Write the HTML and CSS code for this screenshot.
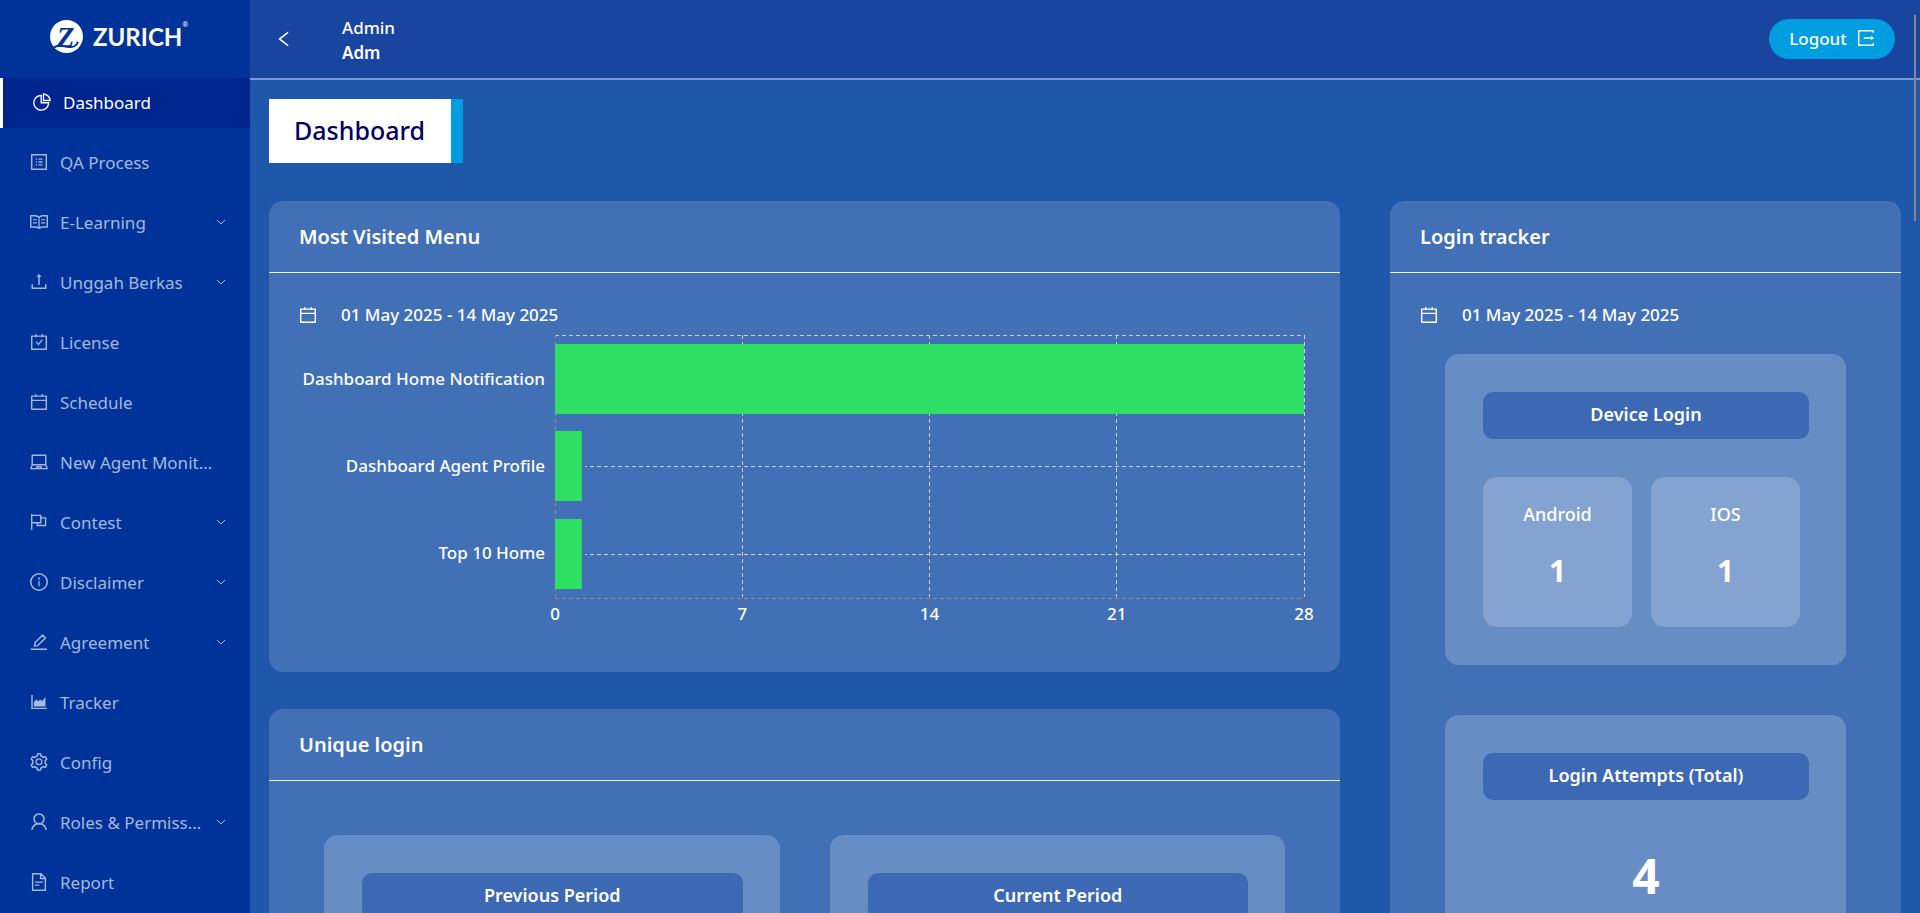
FILE: index.html
```html
<!DOCTYPE html>
<html lang="en">
<head>
<meta charset="utf-8">
<title>Dashboard</title>
<meta name="viewport" content="width=device-width, initial-scale=1">
<link rel="stylesheet" href="styles.css">
</head>
<body>
<svg class="sprite" aria-hidden="true">
  <symbol id="i-pie" viewBox="64 64 896 896"><path d="M864 518H506V160c0-4.400-3.600-8-8-8h-26a398.460 398.460 0 00-282.800 117.100 398.190 398.190 0 00-85.700 127.100A397.610 397.610 0 0072 552a398.460 398.460 0 00117.100 282.800c36.700 36.700 79.500 65.600 127.100 85.700A397.610 397.610 0 00472 952a398.460 398.460 0 00282.800-117.100c36.700-36.700 65.600-79.500 85.700-127.100A397.610 397.610 0 00872 552v-26c0-4.400-3.600-8-8-8zM705.700 787.800A331.590 331.590 0 01470.400 884c-88.100-.4-170.900-34.900-233.200-97.200C174.500 724.100 140 640.700 140 552c0-88.700 34.500-172.100 97.200-234.800 54.600-54.600 124.900-87.900 200.800-95.500V586h364.300c-7.700 76.300-41.300 147-96.600 201.800zM952 462.400l-2.600-28.200c-8.500-92.100-49.400-179-115.200-244.600A399.400 399.400 0 00589 74.600L560.700 72c-4.700-.4-8.700 3.200-8.700 7.900V464c0 4.400 3.600 8 8 8l384-1c4.700 0 8.400-4 8-8.600zm-332.200-58.200V147.600a332.240 332.240 0 01166.400 89.800c45.700 45.600 77 103.600 90 166.100l-256.400.7z"/></symbol>
  <symbol id="i-profile" viewBox="64 64 896 896"><path fill="none" stroke="currentColor" stroke-width="72" stroke-linejoin="round" d="M148 148h728v728H148z"/><path d="M484 336h200v64H484zM484 480h200v64H484zM484 624h200v64H484z"/><circle cx="380" cy="368" r="40"/><circle cx="380" cy="512" r="40"/><circle cx="380" cy="656" r="40"/></symbol>
  <symbol id="i-read" viewBox="64 64 896 896"><path d="M928 161H699.200c-49.100 0-97.100 14.100-138.400 40.700L512 233l-48.800-31.300A255.200 255.200 0 00324.800 161H96c-17.700 0-32 14.300-32 32v568c0 17.700 14.300 32 32 32h228.800c49.100 0 97.100 14.100 138.400 40.700l44.400 28.600c1.300.8 2.800 1.300 4.300 1.300s3-.4 4.300-1.300l44.400-28.600C602 807.100 650.100 793 699.200 793H928c17.700 0 32-14.300 32-32V193c0-17.700-14.300-32-32-32zM324.800 721H136V233h188.800c35.400 0 69.800 10.100 99.500 29.200l48.800 31.300 6.900 4.500v462c-47.600-25.600-100.800-39-155.200-39zm563.200 0H699.200c-54.400 0-107.600 13.400-155.200 39V298l6.900-4.500 48.800-31.300c29.700-19.100 64.100-29.200 99.500-29.200H888v488zM208 369h200v60H208zM208 529h200v60H208zM616 369h200v60H616zM616 529h200v60H616z"/></symbol>
  <symbol id="i-upload" viewBox="64 64 896 896"><path d="M518.300 114.300a8 8 0 00-12.600 0l-112 141.700c-4.100 5.300-.4 13 6.300 13h73.900V654c0 4.400 3.600 8 8 8h60c4.400 0 8-3.600 8-8V269H624c6.700 0 10.400-7.700 6.300-12.900L518.300 114.300zM878 626h-60c-4.400 0-8 3.600-8 8v154H214V634c0-4.400-3.600-8-8-8h-60c-4.400 0-8 3.600-8 8v198c0 17.700 14.300 32 32 32h684c17.700 0 32-14.300 32-32V634c0-4.400-3.600-8-8-8z"/></symbol>
  <symbol id="i-check" viewBox="64 64 896 896"><path fill="none" stroke="currentColor" stroke-width="72" stroke-linejoin="round" d="M148 220h728v656H148z"/><path fill="none" stroke="currentColor" stroke-width="64" d="M352 112v160M672 112v160M370 500l112 140 190-240"/></symbol>
  <symbol id="i-calendar" viewBox="64 64 896 896"><path fill="none" stroke="currentColor" stroke-width="72" stroke-linejoin="round" d="M148 220h728v656H148z"/><path fill="none" stroke="currentColor" stroke-width="64" d="M352 112v152M672 112v152M148 428h728"/></symbol>
  <symbol id="i-laptop" viewBox="64 64 896 896"><path fill="none" stroke="currentColor" stroke-width="68" stroke-linejoin="round" d="M174 176h676v470H174zM174 646L102 844h820L850 646M380 838l26-88h212l26 88"/></symbol>
  <symbol id="i-flag" viewBox="64 64 896 896"><path fill="none" stroke="currentColor" stroke-width="68" d="M148 112v800M148 184h452v368H148M600 304h240v384H424V552"/></symbol>
  <symbol id="i-info" viewBox="64 64 896 896"><circle cx="512" cy="512" r="410" fill="none" stroke="currentColor" stroke-width="76"/><circle cx="512" cy="336" r="48"/><path d="M480 448h64v272h-64z"/></symbol>
  <symbol id="i-edit" viewBox="64 64 896 896"><path d="M112 836h800v76H112z"/><path fill="none" stroke="currentColor" stroke-width="70" stroke-linejoin="round" d="M285 719l28-168 380-382 139 140-380 382z"/></symbol>
  <symbol id="i-area" viewBox="64 64 896 896"><path d="M888 792H200V168c0-4.400-3.600-8-8-8h-56c-4.400 0-8 3.600-8 8v688c0 4.400 3.600 8 8 8h752c4.400 0 8-3.600 8-8v-56c0-4.400-3.600-8-8-8zM256 736V520l120-140 90 90 110-80 90 70 170-180v456z"/></symbol>
  <symbol id="i-setting" viewBox="64 64 896 896"><path d="M924.800 625.700l-65.500-56c3.100-19 4.700-38.400 4.700-57.800s-1.600-38.800-4.700-57.800l65.500-56a32.030 32.030 0 009.300-35.200l-.9-2.600a443.740 443.740 0 00-79.700-137.900l-1.800-2.100a32.120 32.120 0 00-35.100-9.500l-81.300 28.900c-30-24.600-63.500-44-99.700-57.600l-15.700-85a32.050 32.050 0 00-25.800-25.700l-2.700-.5c-52.100-9.400-106.900-9.400-159 0l-2.700.5a32.050 32.050 0 00-25.800 25.700l-15.800 85.400a351.860 351.860 0 00-99 57.400l-81.900-29.100a32 32 0 00-35.100 9.500l-1.800 2.100a446.020 446.020 0 00-79.700 137.900l-.9 2.600c-4.500 12.500-.8 26.500 9.300 35.200l66.300 56.600c-3.100 18.800-4.600 38-4.600 57.100 0 19.200 1.500 38.400 4.600 57.100L99 625.500a32.030 32.030 0 00-9.300 35.200l.9 2.600c18.100 50.400 44.900 96.900 79.700 137.900l1.800 2.100a32.120 32.120 0 0035.100 9.500l81.900-29.100c29.800 24.500 63.100 43.900 99 57.400l15.800 85.400a32.050 32.050 0 0025.800 25.700l2.700.5a449.400 449.400 0 00159 0l2.700-.5a32.050 32.050 0 0025.800-25.700l15.700-85a350 350 0 0099.700-57.600l81.300 28.900a32 32 0 0035.100-9.500l1.800-2.100c34.800-41.100 61.600-87.500 79.700-137.900l.9-2.600c4.500-12.300.8-26.300-9.300-35zM788.300 465.900c2.500 15.100 3.800 30.600 3.800 46.100s-1.300 31-3.800 46.100l-6.600 40.100 74.700 63.900a370.030 370.030 0 01-42.600 73.600L721 702.800l-31.400 25.800c-23.900 19.600-50.500 35-79.300 45.800l-38.100 14.300-17.900 97a377.500 377.500 0 01-85 0l-17.900-97.200-37.800-14.500c-28.500-10.800-55-26.200-78.700-45.700l-31.400-25.900-93.400 33.200c-17-22.900-31.200-47.600-42.600-73.600l75.500-64.500-6.500-40c-2.400-14.900-3.700-30.300-3.700-45.500 0-15.300 1.200-30.600 3.700-45.500l6.500-40-75.500-64.500c11.300-26.100 25.600-50.700 42.600-73.600l93.400 33.200 31.400-25.900c23.700-19.500 50.200-34.900 78.700-45.700l37.900-14.300 17.900-97.200c28.100-3.200 56.800-3.200 85 0l17.900 97 38.100 14.300c28.700 10.800 55.400 26.200 79.300 45.800l31.400 25.800 92.800-32.900c17 22.900 31.200 47.600 42.600 73.600L781.800 426l6.500 39.900z"/><circle cx="512" cy="502" r="144" fill="none" stroke="currentColor" stroke-width="64"/></symbol>
  <symbol id="i-user" viewBox="64 64 896 896"><path fill="none" stroke="currentColor" stroke-width="76" d="M158 904a356 356 0 01708 0"/><circle cx="512" cy="358" r="248" fill="none" stroke="currentColor" stroke-width="76"/></symbol>
  <symbol id="i-file" viewBox="64 64 896 896"><path fill="none" stroke="currentColor" stroke-width="72" stroke-linejoin="round" d="M196 100h418l214 214v610H196zM592 110v228h232"/><path d="M312 490h400v60H312zM312 640h220v60H312z"/></symbol>
  <symbol id="i-export" viewBox="64 64 896 896"><path fill="none" stroke="currentColor" stroke-width="72" stroke-linejoin="round" d="M876 250V148H148v728h728V774"/><path d="M400 478h370v-76l142 110-142 110v-76H400z"/></symbol>
  <symbol id="i-left" viewBox="64 64 896 896"><path d="M724 218.300V141c0-6.700-7.700-10.400-12.900-6.300L260.300 486.800a31.860 31.860 0 000 50.300l450.800 352.100c5.300 4.100 12.900.4 12.900-6.300v-77.300c0-4.900-2.300-9.600-6.100-12.600l-360-281 360-281.100c3.800-3 6.100-7.700 6.100-12.600z"/></symbol>
  <symbol id="i-down" viewBox="0 0 10 10"><path d="M1 3l4 4 4-4" fill="none" stroke="currentColor" stroke-width="1"/></symbol>
</svg>

<div class="app">
  <aside class="sidebar">
    <div class="brand">
      <svg class="brand-mark" viewBox="0 0 32 32" role="img" aria-label="Zurich">
        <circle cx="16" cy="16" r="16" fill="#fff"/>
        <text class="brand-z" x="15" y="26" text-anchor="middle">Z</text>
        <path d="M3 27c5-3 9-2 14-1 5 1 9-1 10-5" fill="none" stroke="#039" stroke-width="2"/>
      </svg>
      <span class="brand-name">ZURICH</span><span class="brand-reg">®</span>
    </div>
    <nav class="menu">
      <a class="item active" href="#"><svg class="icon"><use href="#i-pie"/></svg><span class="label">Dashboard</span></a>
      <a class="item" href="#"><svg class="icon"><use href="#i-profile"/></svg><span class="label">QA Process</span></a>
      <a class="item" href="#"><svg class="icon"><use href="#i-read"/></svg><span class="label">E-Learning</span><svg class="arrow"><use href="#i-down"/></svg></a>
      <a class="item" href="#"><svg class="icon"><use href="#i-upload"/></svg><span class="label">Unggah Berkas</span><svg class="arrow"><use href="#i-down"/></svg></a>
      <a class="item" href="#"><svg class="icon"><use href="#i-check"/></svg><span class="label">License</span></a>
      <a class="item" href="#"><svg class="icon"><use href="#i-calendar"/></svg><span class="label">Schedule</span></a>
      <a class="item" href="#"><svg class="icon"><use href="#i-laptop"/></svg><span class="label">New Agent Monitoring</span></a>
      <a class="item" href="#"><svg class="icon"><use href="#i-flag"/></svg><span class="label">Contest</span><svg class="arrow"><use href="#i-down"/></svg></a>
      <a class="item" href="#"><svg class="icon"><use href="#i-info"/></svg><span class="label">Disclaimer</span><svg class="arrow"><use href="#i-down"/></svg></a>
      <a class="item" href="#"><svg class="icon"><use href="#i-edit"/></svg><span class="label">Agreement</span><svg class="arrow"><use href="#i-down"/></svg></a>
      <a class="item" href="#"><svg class="icon"><use href="#i-area"/></svg><span class="label">Tracker</span></a>
      <a class="item" href="#"><svg class="icon"><use href="#i-setting"/></svg><span class="label">Config</span></a>
      <a class="item" href="#"><svg class="icon"><use href="#i-user"/></svg><span class="label">Roles &amp; Permissions</span><svg class="arrow"><use href="#i-down"/></svg></a>
      <a class="item" href="#"><svg class="icon"><use href="#i-file"/></svg><span class="label">Report</span></a>
    </nav>
  </aside>

  <div class="page">
    <header class="topbar">
      <button class="back" type="button" aria-label="Collapse menu"><svg class="icon"><use href="#i-left"/></svg></button>
      <div class="user"><span>Admin</span><strong>Adm</strong></div>
      <button class="logout" type="button">Logout<svg class="icon-sm"><use href="#i-export"/></svg></button>
    </header>

    <main class="content">
      <h1 class="title">Dashboard</h1>
      <div class="columns">
        <div class="stack">
          <section class="card">
            <h2 class="card-head">Most Visited Menu</h2>
            <div class="card-body">
              <button class="range" type="button"><svg class="icon-sm"><use href="#i-calendar"/></svg>01 May 2025 - 14 May 2025</button>
              <div class="chart">
                <div class="y-labels"><span>Dashboard Home Notification</span><span>Dashboard Agent Profile</span><span>Top 10 Home</span></div>
                <svg class="plot" role="img" aria-label="Visits per menu">
                  <g class="axis">
                    <line x1="0" x2="0" y1="0" y2="269"/><line x1="0" x2="100%" y1="263" y2="263"/>
                    <line x1="-7" x2="0" y1="44" y2="44"/><line x1="-7" x2="0" y1="131" y2="131"/><line x1="-7" x2="0" y1="219" y2="219"/>
                    <line x1="25%" x2="25%" y1="263" y2="269"/><line x1="50%" x2="50%" y1="263" y2="269"/><line x1="75%" x2="75%" y1="263" y2="269"/><line x1="100%" x2="100%" y1="263" y2="269"/>
                  </g>
                  <g class="grid">
                    <line x1="0" x2="100%" y1="0" y2="0"/><line x1="0" x2="100%" y1="44" y2="44"/><line x1="0" x2="100%" y1="131" y2="131"/><line x1="0" x2="100%" y1="219" y2="219"/>
                    <line x1="25%" x2="25%" y1="0" y2="262"/><line x1="50%" x2="50%" y1="0" y2="262"/><line x1="75%" x2="75%" y1="0" y2="262"/><line x1="100%" x2="100%" y1="0" y2="262"/>
                  </g>
                  <g class="grid under-axis">
                    <line x1="0" x2="100%" y1="263" y2="263"/><line x1="0" x2="0" y1="0" y2="263"/>
                  </g>
                  <g class="halo"><rect x="1" y="96" width="3.870%" height="70"/><rect x="1" y="184" width="3.870%" height="70"/></g>
                  <g class="bars"><rect x="0" y="9" width="100%" height="70"/><rect x="0" y="96" width="3.570%" height="70"/><rect x="0" y="184" width="3.570%" height="70"/></g>
                </svg>
                <div class="x-labels"><span>0</span><span>7</span><span>14</span><span>21</span><span>28</span></div>
              </div>
            </div>
          </section>

          <section class="card">
            <h2 class="card-head">Unique login</h2>
            <div class="periods">
              <div class="panel"><h3 class="pill">Previous Period</h3><p class="total">4</p></div>
              <div class="panel"><h3 class="pill">Current Period</h3><p class="total">4</p></div>
            </div>
          </section>
        </div>

        <section class="card">
          <h2 class="card-head">Login tracker</h2>
          <div class="card-body">
            <button class="range" type="button"><svg class="icon-sm"><use href="#i-calendar"/></svg>01 May 2025 - 14 May 2025</button>
            <div class="trackers">
              <div class="panel">
                <h3 class="pill">Device Login</h3>
                <div class="devices">
                  <div class="device"><span>Android</span><b>1</b></div>
                  <div class="device"><span>IOS</span><b>1</b></div>
                </div>
              </div>
              <div class="panel"><h3 class="pill">Login Attempts (Total)</h3><p class="total">4</p></div>
            </div>
          </div>
        </section>
      </div>
    </main>
  </div>
</div>
<div class="scroll-thumb"></div>
</body>
</html>
```

FILE: styles.css
```css
* { box-sizing: border-box; }

body {
  margin: 0;
  height: 100vh;
  overflow: hidden;
  font-family: "Noto Sans", "Open Sans", sans-serif;
  font-size: 17px;
  line-height: 25px;
  color: #fff;
  background: #1f57ab;
}

h1, h2, h3, p { margin: 0; }
button { font: inherit; color: inherit; border: 0; padding: 0; background: none; cursor: pointer; }
svg { fill: currentColor; flex: none; }

.sprite { position: absolute; width: 0; height: 0; }
.icon, .icon-sm { width: 18px; height: 18px; }

.app { display: flex; height: 100vh; }

/* Sidebar */
.sidebar { width: 250px; flex: none; background: #039; overflow: hidden; }
.brand { display: flex; align-items: center; height: 78px; padding: 0 0 6px 50px; }
.brand-mark { width: 33px; height: 33px; margin-right: 10px; }
.brand-z { font: italic bold 28px "Liberation Serif", serif; fill: #039; }
.brand-name { font-family: Lato, sans-serif; font-weight: 700; font-size: 24px; }
.brand-reg { font-size: 7px; align-self: flex-start; padding-top: 12px; }

.menu { display: flex; flex-direction: column; gap: 10px; }
.item {
  display: flex;
  align-items: center;
  height: 50px;
  padding: 0 24px 2px 30px;
  color: #a6b8de;
  text-decoration: none;
}
.item.active { color: #fff; background: #00258d; border-left: 3px solid #fff; }
.label { flex: 1; min-width: 0; margin: 0 4px 0 12px; overflow: hidden; text-overflow: ellipsis; white-space: nowrap; }
.arrow { width: 10px; height: 10px; margin-left: 8px; }

/* Header */
.page { flex: 1; min-width: 0; display: flex; flex-direction: column; }
.topbar {
  display: flex;
  align-items: center;
  height: 80px;
  flex: none;
  padding: 0 25px;
  background: #1845a0;
  border-bottom: 2px solid #7e9acb;
}
.back { display: flex; width: 67px; }
.user { display: flex; flex-direction: column; flex: 1; padding-top: 2px; font-weight: 500; }
.user strong { font-weight: 600; }
.logout {
  display: flex;
  align-items: center;
  justify-content: center;
  gap: 10px;
  width: 126px;
  height: 40px;
  padding-bottom: 2px;
  border-radius: 20px;
  background: #009ee0;
  font-weight: 500;
}

/* Content */
.content { flex: 1; min-height: 0; overflow: hidden; padding: 19px 19px 0; }
.title {
  width: max-content;
  padding: 11px 26px 13px 25px;
  border-right: 12px solid #009ee0;
  background: #fff;
  color: #006;
  font-size: 25px;
  line-height: 40px;
  font-weight: 500;
}
.columns { display: grid; grid-template-columns: 1071fr 511fr; gap: 50px; margin-top: 38px; }
.stack { display: flex; flex-direction: column; gap: 37px; min-width: 0; }
.card { border-radius: 14px; background: #4170b7; min-width: 0; }
.card-head {
  padding: 21px 30px 20px;
  border-bottom: 1px solid #e8f0fa;
  font-size: 20px;
  line-height: 30px;
  font-weight: 600;
}
.card-body { padding: 29px 30px 0; font-weight: 500; }
.range { display: flex; align-items: center; gap: 24px; }

.chart {
  display: grid;
  grid-template-columns: 256px 1fr;
  grid-template-rows: 263px auto;
  padding: 8px 6px 46px 0;
}
.y-labels { display: grid; grid-template-rows: repeat(3, 1fr); align-items: center; justify-items: end; padding: 0 10px 2px 0; white-space: nowrap; }
.plot { width: 100%; height: 263px; overflow: visible; }
.grid line { stroke: #ccd0d6; stroke-width: 1; stroke-dasharray: 4 3; shape-rendering: crispEdges; }
.under-axis line { stroke: #8590a8; }
.axis line { stroke: #66696f; stroke-width: 1; shape-rendering: crispEdges; }
.halo { fill: #4170b7; }
.bars { fill: #30e065; }
.x-labels { grid-column: 2; display: flex; justify-content: space-between; padding-top: 3px; }
.x-labels span { display: flex; justify-content: center; width: 0; }

.panel { border-radius: 14px; padding: 38px 37px 38px 38px; background: #678dc5; }
.pill {
  padding: 10px 8px 12px;
  border-radius: 10px;
  background: #3d68b4;
  text-align: center;
  font-size: 18px;
  line-height: 25px;
  font-weight: 600;
}
.periods { display: grid; grid-template-columns: 1fr 1fr; gap: 50px; padding: 54px 55px; }
.trackers { display: grid; gap: 50px; padding: 27px 25px 54px; }
.devices { display: grid; grid-template-columns: 1fr 1fr; gap: 19px; padding: 38px 9px 0 0; }
.device {
  display: flex;
  flex-direction: column;
  align-items: center;
  gap: 24px;
  height: 150px;
  padding-top: 25px;
  border-radius: 14px;
  background: #85a3d1;
  font-size: 18px;
}
.device b { font-size: 30px; line-height: 40px; }
.total { padding-top: 46px; text-align: center; font-size: 48px; line-height: 60px; font-weight: 700; }

.scroll-thumb {
  position: absolute;
  top: 15px;
  right: 4px;
  width: 2px;
  height: 206px;
  background: #8a8686;
}
```
